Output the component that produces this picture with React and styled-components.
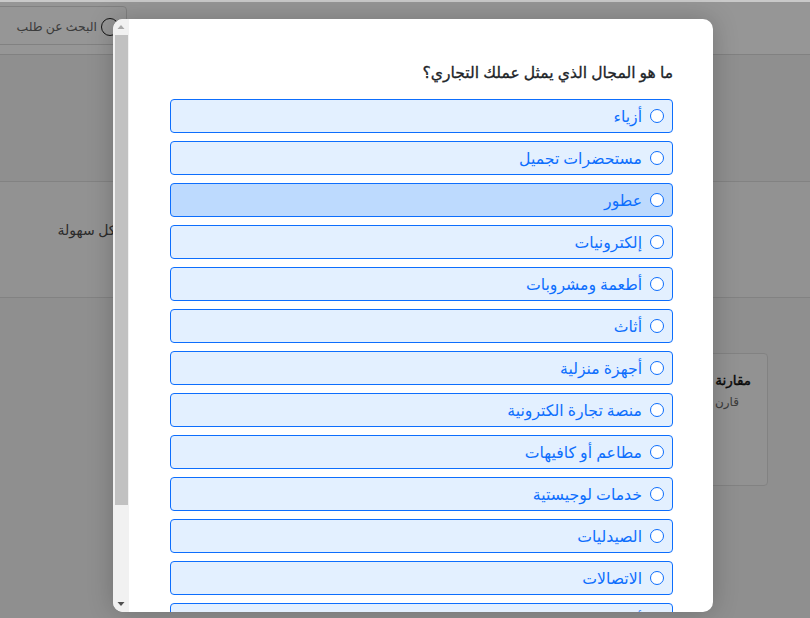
import React from "react";
import styled, { createGlobalStyle } from "styled-components";

const Global = createGlobalStyle`
  html, body { margin: 0; padding: 0; background: #fff; overflow: hidden; }
  body { font-family: "Segoe UI", "Noto Sans", "DejaVu Sans", sans-serif; }
  * { box-sizing: border-box; }
`;

const Page = styled.div`
  position: relative;
  width: 810px;
  height: 618px;
  overflow: hidden;
  direction: rtl;
  background: #f3f3f3;
`;
const TopStrip = styled.div`
  height: 2px;
  background: #c9c9c9;
`;
const Header = styled.header`
  height: 53px;
  display: flex;
  align-items: center;
  padding-right: 683px;
  border-bottom: 1px solid #dcdcdc;
  background: #fff;
`;
const Search = styled.div`
  width: 150px;
  height: 39px;
  flex: none;
  display: flex;
  align-items: center;
  gap: 4px;
  padding-top: 2px;
  margin-bottom: 5px;
  border: 1px solid #dcdcdc;
  border-radius: 4px;
  color: #666;
  font-size: 12.4px;
`;
const SearchRing = styled.span`
  width: 18px;
  height: 18px;
  flex: none;
  border-radius: 50%;
  border: 1.5px solid #222;
  margin-right: 7px;
`;
const Hero = styled.section`
  height: 126px;
`;
const Band = styled.section`
  height: 117px;
  display: flex;
  align-items: flex-start;
  padding: 38px 677px 0 0;
  border-top: 1px solid #dedede;
  border-bottom: 1px solid #dedede;
  background: #f8f8f8;
  color: #4a4a4a;
  font-size: 14px;
  line-height: 20px;
  white-space: nowrap;
`;
const CardRow = styled.div`
  padding: 55px 42px 0 0;
`;
const Card = styled.article`
  width: 200px;
  height: 133px;
  padding: 15px 16px;
  border: 1px solid #dedede;
  border-radius: 4px;
  background: #f8f8f8;
`;
const CardTitle = styled.h3`
  margin: 0;
  color: #111;
  font-size: 13.5px;
  line-height: 22px;
  font-weight: 400;
  -webkit-text-stroke: 0.4px #111;
`;
const CardText = styled.p`
  margin: 2px 12px 0 0;
  color: #666;
  font-size: 12px;
`;
const Backdrop = styled.div`
  position: absolute;
  inset: 2px 0 0 0;
  background: rgba(0, 0, 0, 0.41);
`;
const Modal = styled.div`
  position: absolute;
  left: 113px;
  top: 19px;
  width: 600px;
  height: 593px;
  display: flex;
  flex-direction: row;
  background: #fff;
  border-radius: 10px;
  overflow: hidden;
  box-shadow: 0 0 26px rgba(0, 0, 0, 0.22);
`;
const Content = styled.div`
  flex: 1;
  min-width: 0;
  padding: 43px 40px 0 41px;
  overflow: hidden;
`;
const Question = styled.h2`
  margin: 0 0 16px;
  height: 21px;
  color: #212529;
  font-size: 15.6px;
  line-height: 21px;
  font-weight: 400;
  -webkit-text-stroke: 0.3px #212529;
`;
const Options = styled.div`
  display: flex;
  flex-direction: column;
  gap: 8px;
`;
const Option = styled.label`
  height: 34px;
  flex: none;
  display: flex;
  align-items: center;
  gap: 8px;
  padding: 0 8px;
  border: 1px solid #0d6efd;
  border-radius: 4px;
  background: ${(p) => (p.$active ? "#bddafe" : "#e3f0ff")};
  color: #0d6efd;
  font-size: 15.7px;
`;
const Radio = styled.span`
  width: 14px;
  height: 14px;
  flex: none;
  border: 1.4px solid #0d6efd;
  border-radius: 50%;
  background: #fff;
`;
const Track = styled.div`
  width: 16px;
  flex: none;
  order: -1;
  display: flex;
  flex-direction: column;
  background: #f1f1f1;
`;
const Arrow = styled.svg`
  width: 16px;
  height: 16px;
  flex: none;
  display: block;
`;
const Thumb = styled.div`
  height: 470px;
  flex: none;
  margin: 0 1px 0 2px;
  background: #c1c1c1;
`;
const Gap = styled.div`
  flex: 1;
`;

const items = [
  "أزياء",
  "مستحضرات تجميل",
  "عطور",
  "إلكترونيات",
  "أطعمة ومشروبات",
  "أثاث",
  "أجهزة منزلية",
  "منصة تجارة الكترونية",
  "مطاعم أو كافيهات",
  "خدمات لوجيستية",
  "الصيدليات",
  "الاتصالات",
  "أخرى",
];

export default function App() {
  return (
    <Page>
      <Global />
      <TopStrip />
      <Header>
        <Search>
          <SearchRing />
          البحث عن طلب
        </Search>
      </Header>
      <Hero />
      <Band>بشكل سهولة</Band>
      <CardRow>
        <Card>
          <CardTitle>مقارنة</CardTitle>
          <CardText>قارن</CardText>
        </Card>
      </CardRow>
      <Backdrop />
      <Modal dir="ltr">
        <Content dir="rtl">
          <Question>ما هو المجال الذي يمثل عملك التجاري؟</Question>
          <Options>
            {items.map((t, i) => (
              <Option key={t} $active={i === 2}>
                <Radio />
                {t}
              </Option>
            ))}
          </Options>
        </Content>
        <Track>
          <Arrow viewBox="0 0 16 16">
            <path d="M4.5 10 L8 6 L11.5 10 Z" fill="#a8a8a8" />
          </Arrow>
          <Thumb />
          <Gap />
          <Arrow viewBox="0 0 16 16">
            <path d="M4.5 6 L11.5 6 L8 10 Z" fill="#505050" />
          </Arrow>
        </Track>
      </Modal>
    </Page>
  );
}
